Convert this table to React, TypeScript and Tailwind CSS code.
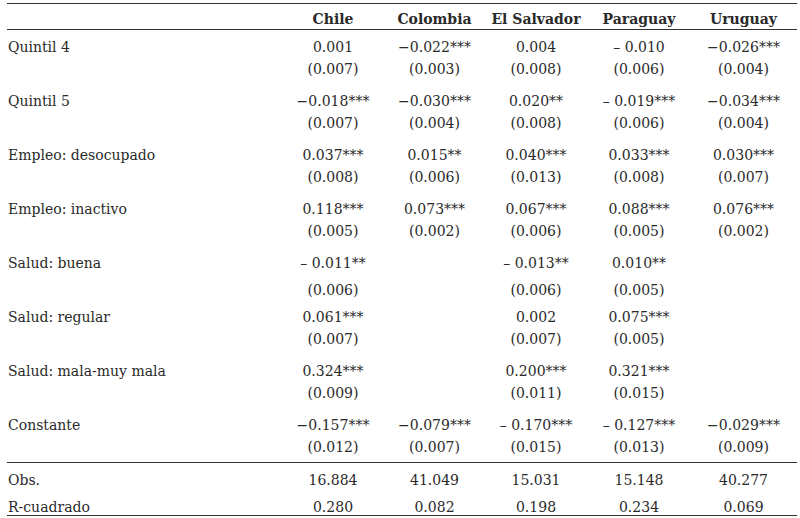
const cols = ["Chile", "Colombia", "El Salvador", "Paraguay", "Uruguay"];

type Row = { label: string; vals: (string | null)[]; ses: (string | null)[]; gap?: boolean };

const rows: Row[] = [
  {
    label: "Quintil 4",
    vals: ["0.001", "−0.022***", "0.004", "– 0.010", "−0.026***"],
    ses: ["(0.007)", "(0.003)", "(0.008)", "(0.006)", "(0.004)"],
  },
  {
    label: "Quintil 5",
    vals: ["−0.018***", "−0.030***", "0.020**", "– 0.019***", "−0.034***"],
    ses: ["(0.007)", "(0.004)", "(0.008)", "(0.006)", "(0.004)"],
  },
  {
    label: "Empleo: desocupado",
    vals: ["0.037***", "0.015**", "0.040***", "0.033***", "0.030***"],
    ses: ["(0.008)", "(0.006)", "(0.013)", "(0.008)", "(0.007)"],
  },
  {
    label: "Empleo: inactivo",
    vals: ["0.118***", "0.073***", "0.067***", "0.088***", "0.076***"],
    ses: ["(0.005)", "(0.002)", "(0.006)", "(0.005)", "(0.002)"],
  },
  {
    label: "Salud: buena",
    vals: ["– 0.011**", null, "– 0.013**", "0.010**", null],
    ses: ["(0.006)", null, "(0.006)", "(0.005)", null],
    gap: true,
  },
  {
    label: "Salud: regular",
    vals: ["0.061***", null, "0.002", "0.075***", null],
    ses: ["(0.007)", null, "(0.007)", "(0.005)", null],
  },
  {
    label: "Salud: mala-muy mala",
    vals: ["0.324***", null, "0.200***", "0.321***", null],
    ses: ["(0.009)", null, "(0.011)", "(0.015)", null],
  },
  {
    label: "Constante",
    vals: ["−0.157***", "−0.079***", "– 0.170***", "– 0.127***", "−0.029***"],
    ses: ["(0.012)", "(0.007)", "(0.015)", "(0.013)", "(0.009)"],
  },
];

const grid = "grid grid-cols-[275px_102px_101px_102px_104px_105px]";

export default function App() {
  return (
    <div
      className="w-[800px] h-[518px] bg-white text-[#2a2a2a] text-[14px] pl-[7px] pr-[3px]"
      style={{ fontFamily: '"DejaVu Serif", "Liberation Serif", serif' }}
    >
      <div className="h-[3px]" />
      <div className="border-t border-[#333]" />
      <div className={`${grid} h-[26px] pt-[5px] items-center font-bold border-b border-[#333]`}>
        <div />
        {cols.map((c) => (
          <div key={c} className="text-center">
            {c}
          </div>
        ))}
      </div>
      {rows.map((r) => (
        <div key={r.label} className={`${grid} h-[54px] pt-[6px] leading-[22px]`}>
          <div className="pl-[1px]">{r.label}</div>
          {r.vals.map((v, i) => (
            <div key={i} className="text-center">
              <div>{v}</div>
              <div className={r.gap ? "mt-[5px]" : ""}>{r.ses[i]}</div>
            </div>
          ))}
        </div>
      ))}
      <div className={`${grid} h-[31px] pt-[4px] items-center border-t border-[#333]`}>
        <div className="pl-[1px]">Obs.</div>
        {["16.884", "41.049", "15.031", "15.148", "40.277"].map((v) => (
          <div key={v} className="text-center">
            {v}
          </div>
        ))}
      </div>
      <div className={`${grid} h-[23px] pt-[4px] items-center border-b border-[#333]`}>
        <div className="pl-[1px]">R-cuadrado</div>
        {["0.280", "0.082", "0.198", "0.234", "0.069"].map((v) => (
          <div key={v} className="text-center">
            {v}
          </div>
        ))}
      </div>
    </div>
  );
}
